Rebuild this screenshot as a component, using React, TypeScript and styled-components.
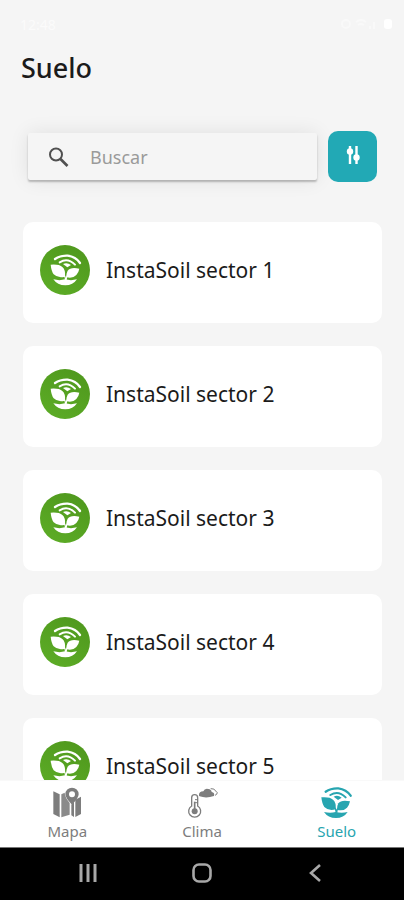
import React from "react";
import styled, { createGlobalStyle } from "styled-components";

const GlobalStyle = createGlobalStyle`
  *, *::before, *::after { box-sizing: border-box; }
  body {
    margin: 0;
    background: #f5f5f5;
    color: #1b1b1b;
    font-family: "Noto Sans", sans-serif;
  }
  button, input { font: inherit; }
`;

const Screen = styled.div`
  display: flex;
  flex-direction: column;
  height: 100vh;
  overflow: hidden;
`;

const StatusBar = styled.div`
  display: flex;
  align-items: center;
  justify-content: space-between;
  flex: none;
  height: 48px;
  padding: 0 12px 0 20px;
  color: #fbfbfb;
  font-size: 14px;
`;

const StatusIcons = styled.div`
  display: flex;
  align-items: center;
  gap: 4px;
`;

const Title = styled.h1`
  flex: none;
  margin: 0;
  padding: 0 21px;
  font-size: 27px;
  font-weight: 500;
  line-height: 40px;
`;

const SearchRow = styled.form`
  display: flex;
  gap: 11px;
  flex: none;
  padding: 43px 27px 40px 28px;
`;

const SearchField = styled.label`
  display: flex;
  align-items: center;
  flex: 1;
  min-width: 0;
  gap: 19px;
  margin: 2px 0;
  padding: 0 19px;
  border-radius: 2px;
  background: #f5f5f5;
  box-shadow: 0 2px 2px rgba(0, 0, 0, 0.24), 0 0 20px rgba(0, 0, 0, 0.09);
`;

const SearchInput = styled.input`
  flex: 1;
  min-width: 0;
  padding: 0;
  border: 0;
  outline: 0;
  background: transparent;
  color: #1b1b1b;
  font-size: 18px;

  &::placeholder {
    color: #9a9a9a;
    opacity: 1;
  }
`;

const FilterButton = styled.button`
  display: flex;
  align-items: center;
  justify-content: center;
  flex: none;
  width: 49px;
  height: 51px;
  padding: 0 0 4px;
  border: 0;
  border-radius: 10px;
  background: #22a9b5;
  color: #fff;
`;

const SensorList = styled.ul`
  display: flex;
  flex-direction: column;
  flex: 1;
  gap: 23px;
  min-height: 0;
  margin: 0;
  padding: 0 22px 0 23px;
  overflow: hidden;
  list-style: none;
`;

const SensorCard = styled.li`
  display: flex;
  align-items: center;
  flex: none;
  gap: 16px;
  height: 101px;
  padding: 0 17px 6px;
  border-radius: 10px;
  background: #fff;
  font-size: 21px;
`;

const TabBar = styled.nav`
  display: flex;
  flex: none;
  height: 67px;
  border-top: 1px solid #f9f9f9;
  background: #fff;
`;

const Tab = styled.a<{ $active?: boolean }>`
  display: flex;
  flex: 1;
  flex-direction: column;
  align-items: center;
  gap: 1px;
  padding-top: 6px;
  color: ${(p) => (p.$active ? "#27a5b0" : "#7d7d7d")};
  font-size: 15px;
  line-height: 22px;
  text-decoration: none;
`;

const SystemBar = styled.div`
  display: flex;
  align-items: center;
  justify-content: space-between;
  flex: none;
  height: 53px;
  padding: 0 73px 3px;
  border-top: 1px solid #777;
  background: #000;
`;

const SystemButton = styled.button`
  display: flex;
  padding: 0;
  border: 0;
  background: none;
  color: #a8a8a8;
`;

function SproutShape() {
  return (
    <>
      <path d="M14 14 Q30 3 52 4 Q76 7 89 26" fill="none" stroke="currentColor" strokeWidth="7" strokeLinecap="round" />
      <path d="M28 24 Q52 9 74 31" fill="none" stroke="currentColor" strokeWidth="6" strokeLinecap="round" />
      <path d="M38 29 Q50 23 62 32 L51 39 Z" fill="currentColor" />
      <path d="M1 31 Q27 29 36 38 Q46 46 44 67 Q23 73 10 60 Q3 50 1 31 Z" fill="currentColor" />
      <path d="M87 43 Q61 37 52 49 Q47 57 49 69 Q68 73 78 62 Q85 54 87 43 Z" fill="currentColor" />
      <path d="M38 58 Q45 64 46 77 M54 58 Q48 66 47 77" fill="none" stroke="currentColor" strokeWidth="4" />
      <path d="M9 75 Q28 80 44 75 Q62 80 80 75 Q68 93 45 93 Q21 93 9 75 Z" fill="currentColor" />
    </>
  );
}

function SoilBadge() {
  return (
    <svg width="50" height="50" viewBox="0 0 150 150" color="#fff" aria-hidden="true">
      <defs>
        <linearGradient id="soil" x1="0.8" y1="0" x2="0.2" y2="1">
          <stop offset="0" stopColor="#4f981d" />
          <stop offset="1" stopColor="#5cac26" />
        </linearGradient>
      </defs>
      <circle cx="75" cy="75" r="75" fill="url(#soil)" />
      <g transform="translate(31 28)">
        <SproutShape />
      </g>
    </svg>
  );
}

function SoilIcon() {
  return (
    <svg width="32" height="32" viewBox="0 0 96 96" aria-hidden="true">
      <SproutShape />
    </svg>
  );
}

function MapIcon() {
  return (
    <svg width="32" height="32" viewBox="0 0 96 96" fill="currentColor" aria-hidden="true">
      <path d="M7 13 L26 22 V91 L7 81 Z" />
      <path d="M31 22 L41 17 Q42 31 56 48 V83 L31 91 Z" opacity="0.9" />
      <path d="M61 53 L69 44 V90 L61 85 Z M73 38 L90 29 V81 L73 90 Z" />
      <path fillRule="evenodd" d="M63 2 A20 20 0 0 1 83 22 Q83 33 63 53 Q43 33 43 22 A20 20 0 0 1 63 2 Z M63 13 A9 9 0 1 0 63 31 A9 9 0 1 0 63 13 Z" />
    </svg>
  );
}

function ClimateIcon() {
  return (
    <svg width="32" height="32" viewBox="0 0 96 96" fill="none" stroke="currentColor" aria-hidden="true">
      <path d="M17 57 V32 A9 9 0 0 1 35 32 V57 A18 18 0 1 1 17 57 Z" strokeWidth="4" />
      <circle cx="26" cy="73" r="9" fill="currentColor" stroke="none" />
      <path d="M26 44 V70" strokeWidth="5" />
      <path d="M34 38 H27 M34 47 H27" strokeWidth="3" />
      <path d="M39 23 Q39 14 52 13 Q56 3 67 6 Q76 7 77 15 Q87 17 84 27 Q61 35 41 28 Q38 26 39 23 Z" fill="currentColor" stroke="none" />
      <path d="M74 5 Q86 4 89 12 Q97 17 92 22 L87 25" strokeWidth="3" />
    </svg>
  );
}

const sensors = [1, 2, 3, 4, 5].map((n) => `InstaSoil sector ${n}`);

export default function App() {
  return (
    <Screen>
      <GlobalStyle />
      <StatusBar>
        <span>12:48</span>
        <StatusIcons>
          <svg width="40" height="14" viewBox="0 0 40 14" fill="none" stroke="#f9f9f9" strokeWidth="2" aria-hidden="true">
            <circle cx="6" cy="7" r="4" />
            <path d="M16 5 Q21 1 26 5 M18 8 Q21 6 24 8 M30 12 V9 M34 12 V5" />
          </svg>
          <svg width="8" height="12" viewBox="0 0 8 12" fill="#fff" aria-hidden="true">
            <rect y="1" width="8" height="10" rx="3" />
          </svg>
        </StatusIcons>
      </StatusBar>
      <Title>Suelo</Title>
      <SearchRow onSubmit={(e) => e.preventDefault()}>
        <SearchField>
          <svg width="24" height="24" viewBox="0 0 24 24" fill="none" stroke="#505050" aria-hidden="true">
            <circle cx="9" cy="9.5" r="6" strokeWidth="2" />
            <path d="M13.5 14 L20.5 21" strokeWidth="2.6" />
          </svg>
          <SearchInput type="text" placeholder="Buscar" aria-label="Buscar" />
        </SearchField>
        <FilterButton type="button" aria-label="Filtros">
          <svg width="14" height="20" viewBox="0 0 14 20" fill="currentColor" stroke="currentColor" aria-hidden="true">
            <path d="M4 1 V19 M10.5 1 V19" strokeWidth="2.4" fill="none" />
            <circle cx="4" cy="6.5" r="3.2" stroke="none" />
            <circle cx="10.5" cy="12.5" r="3.2" stroke="none" />
          </svg>
        </FilterButton>
      </SearchRow>
      <SensorList>
        {sensors.map((name) => (
          <SensorCard key={name}>
            <SoilBadge />
            <span>{name}</span>
          </SensorCard>
        ))}
      </SensorList>
      <TabBar>
        <Tab href="#mapa">
          <MapIcon />
          Mapa
        </Tab>
        <Tab href="#clima">
          <ClimateIcon />
          Clima
        </Tab>
        <Tab href="#suelo" $active aria-current="page">
          <SoilIcon />
          Suelo
        </Tab>
      </TabBar>
      <SystemBar>
        <SystemButton aria-label="Recientes">
          <svg width="30" height="22" viewBox="0 0 30 22" stroke="currentColor" strokeWidth="3" aria-hidden="true">
            <path d="M8 2 V20 M15 2 V20 M22 2 V20" />
          </svg>
        </SystemButton>
        <SystemButton aria-label="Inicio">
          <svg width="22" height="22" viewBox="0 0 22 22" fill="none" stroke="currentColor" strokeWidth="2.6" aria-hidden="true">
            <rect x="2.5" y="2.5" width="17" height="17" rx="5.5" />
          </svg>
        </SystemButton>
        <SystemButton aria-label="Volver">
          <svg width="30" height="22" viewBox="0 0 30 22" fill="none" stroke="currentColor" strokeWidth="2.6" aria-hidden="true">
            <path d="M19 3 L10 11 L19 19" />
          </svg>
        </SystemButton>
      </SystemBar>
    </Screen>
  );
}
